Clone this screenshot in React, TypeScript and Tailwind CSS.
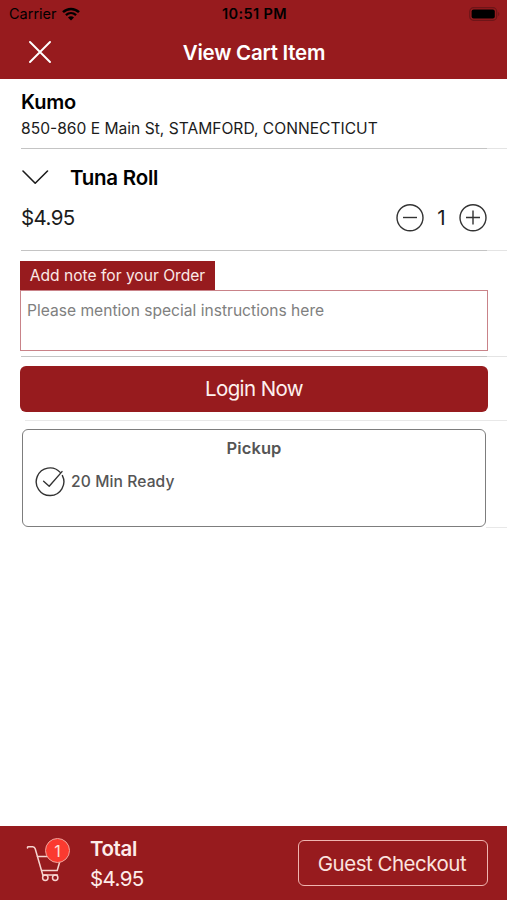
import { useState } from "react";

const item = {
  name: "Tuna Roll",
  price: 4.95,
};

const store = {
  name: "Kumo",
  address: "850-860 E Main St, STAMFORD, CONNECTICUT",
};

function WifiIcon() {
  return (
    <svg width="18" height="14" viewBox="0 0 18 14" fill="none" stroke="black">
      <path d="M1 5.2C5.6 0.9 12.4 0.9 17 5.2" strokeWidth="2.5" />
      <path d="M3.9 8.2C6.9 5.4 11.1 5.4 14.1 8.2" strokeWidth="2.3" />
      <path d="M9 13.4L6 10.4C7.7 8.9 10.3 8.9 12 10.4Z" fill="black" stroke="none" />
    </svg>
  );
}

function BatteryIcon() {
  return (
    <svg width="31" height="14" viewBox="0 0 31 14" fill="none">
      <rect x="0.7" y="0.7" width="27" height="12.6" rx="3.8" stroke="#6e1518" strokeWidth="1.2" />
      <rect x="2.6" y="2.6" width="23.2" height="8.8" rx="2" fill="black" />
      <path d="M29.2 4.9C30.7 5.5 30.7 8.5 29.2 9.1Z" fill="#6e1518" />
    </svg>
  );
}

function CartIcon() {
  return (
    <svg width="36" height="38" viewBox="0 0 36 38" fill="none" stroke="#f6d5d0" strokeWidth="1.5" strokeLinecap="round" strokeLinejoin="round">
      <path d="M1.5 4V3.4C1.5 2.9 1.8 2.7 2.4 2.7H6.8C8.1 2.7 8.8 3.4 9.2 4.8L16.8 31" />
      <path d="M11.5 12.5H35.3L31.2 26.5H15.6" />
      <path d="M16.8 31H31.4" />
      <circle cx="19.3" cy="33.8" r="2.7" />
      <circle cx="29.2" cy="33.8" r="2.7" />
    </svg>
  );
}

function StatusBar() {
  return (
    <div className="grid h-[27px] grid-cols-3 items-center pl-[9px] pr-[7px] text-[14.5px] leading-none text-black">
      <div className="flex items-center gap-[5px]">
        <span className="pt-px">Carrier</span>
        <WifiIcon />
      </div>
      <span className="pt-px text-center font-semibold tracking-[0.35px]">10:51 PM</span>
      <div className="flex justify-end">
        <BatteryIcon />
      </div>
    </div>
  );
}

function Divider() {
  return (
    <div className="flex h-px">
      <div className="ml-[21px] w-[466px] bg-[#c4c4c4]" />
      <div className="flex-1 bg-[#e4e4e4]" />
    </div>
  );
}

export default function App() {
  const [quantity, setQuantity] = useState(1);
  const total = `$${(item.price * quantity).toFixed(2)}`;

  return (
    <div className="flex h-[900px] w-[507px] flex-col overflow-hidden bg-white font-['Inter',sans-serif] text-black">
      <header className="h-[79px] bg-[#971b1e]">
        <StatusBar />
        <div className="grid h-[51px] grid-cols-[80px_1fr_80px] items-center">
          <button aria-label="Close" className="pl-[28px]">
            <svg width="24" height="24" viewBox="0 0 24 24" stroke="white" strokeWidth="1.9" strokeLinecap="round">
              <path d="M2 1L22 21M22 1L2 21" />
            </svg>
          </button>
          <h1 className="pl-px pt-[2px] text-center text-[20.5px] font-semibold tracking-[-0.25px] text-white">View Cart Item</h1>
        </div>
      </header>

      <main className="flex-1">
        <section className="h-[69px] pl-[21px] pt-[11px]">
          <h2 className="text-[20px] font-semibold leading-[25px] tracking-[-0.2px]">{store.name}</h2>
          <p className="mt-[4px] text-[15.6px] leading-[20px] text-[#1c1c1c]">{store.address}</p>
        </section>
        <Divider />

        <section className="h-[101px] pl-[21px] pr-[20px] pt-[15px]">
          <div className="flex h-[28px] items-center">
            <svg width="28" height="16" viewBox="0 0 28 16" fill="none" stroke="#1c1c1c" strokeWidth="1.6" strokeLinecap="round" strokeLinejoin="round">
              <path d="M2 1L14.2 13.2L26.5 1" />
            </svg>
            <h3 className="ml-[21px] text-[20.5px] font-semibold tracking-[-0.25px]">{item.name}</h3>
          </div>
          <div className="mt-[11px] flex h-[30px] items-center justify-between">
            <span className="text-[20.5px] tracking-[-0.6px] text-[#1c1c1c]">${item.price}</span>
            <div className="flex items-center">
              <button aria-label="Decrease" onClick={() => setQuantity(Math.max(1, quantity - 1))}>
                <svg width="28" height="28" viewBox="0 0 28 28" fill="none" stroke="#333" strokeWidth="1.4">
                  <circle cx="14" cy="13.8" r="13" />
                  <path d="M7 13.5H21" />
                </svg>
              </button>
              <span className="w-[35px] text-center text-[20.5px] text-[#1c1c1c]">{quantity}</span>
              <button aria-label="Increase" onClick={() => setQuantity(quantity + 1)}>
                <svg width="28" height="28" viewBox="0 0 28 28" fill="none" stroke="#333" strokeWidth="1.4">
                  <circle cx="14" cy="13.8" r="13" />
                  <path d="M7 13.5H21M14 6.5V20.5" />
                </svg>
              </button>
            </div>
          </div>
        </section>
        <Divider />

        <section className="h-[105px] pl-[20px] pr-[19px] pt-[10px]">
          <div className="flex h-[29px] w-[195px] items-center justify-center bg-[#971b1e] pt-px text-[15.6px] text-[#fbe9e6]">
            Add note for your Order
          </div>
          <textarea
            className="block h-[61px] w-[468px] resize-none border border-[#c98389] px-[6px] pt-[10px] text-[15.6px] leading-[20px] outline-none placeholder:text-[#808080]"
            placeholder="Please mention special instructions here"
          />
        </section>
        <Divider />

        <section className="pb-[8px] pl-[20px] pr-[19px] pt-[9px]">
          <button className="h-[46px] w-[468px] rounded-[6px] bg-[#971b1e] pt-px text-[20.5px] tracking-[-0.6px] text-[#fdf0ee]">
            Login Now
          </button>
        </section>
        <div className="ml-[25px] h-px bg-[#e8e8e8]" />

        <section className="px-[22px] pt-[8px]">
          <div className="h-[98px] w-[464px] rounded-[6px] border-[1.5px] border-[#7d7d7d] pt-[7px] text-[#555]">
            <h4 className="text-center text-[16.5px] font-semibold leading-[22px] tracking-[0.1px]">Pickup</h4>
            <div className="mt-[8px] flex items-center pl-[12px]">
              <svg width="30" height="30" viewBox="0 0 30 30" fill="none" stroke="#333" strokeWidth="1.4" strokeLinecap="round" strokeLinejoin="round">
                <path d="M25.2 5.4A13.8 13.8 0 1 0 27.4 8.6" />
                <path d="M8.6 14.2L14.2 19.2L27 4.6" />
              </svg>
              <span className="ml-[6px] text-[15.6px] font-medium tracking-[0.1px]">20 Min Ready</span>
            </div>
          </div>
        </section>
        <div className="ml-[486px] h-px bg-[#e8e8e8]" />
      </main>

      <footer className="flex h-[74px] items-start bg-[#971b1e] pl-[26px] pr-[19px]">
        <div className="relative mt-[18px] w-[36px]">
          <CartIcon />
          <span className="absolute left-[19px] top-[-6px] flex h-[25px] w-[25px] items-center justify-center rounded-full border border-[#f0a49c] bg-[#fb3a30] text-[16px] text-[#fde0da]">
            {quantity}
          </span>
        </div>
        <div className="ml-[28px] mt-[9px] text-[20.5px] text-[#fdecea]">
          <p className="font-semibold leading-[28px] tracking-[-0.4px]">Total</p>
          <p className="pt-px leading-[30px] tracking-[-0.6px]">{total}</p>
        </div>
        <button className="ml-auto mt-[14px] h-[46px] w-[190px] rounded-[6px] border-[1.5px] border-[#efb5b0] pr-[2px] pt-[2px] text-[20.5px] tracking-[-0.5px] text-[#fbe3df]">
          Guest Checkout
        </button>
      </footer>
    </div>
  );
}
